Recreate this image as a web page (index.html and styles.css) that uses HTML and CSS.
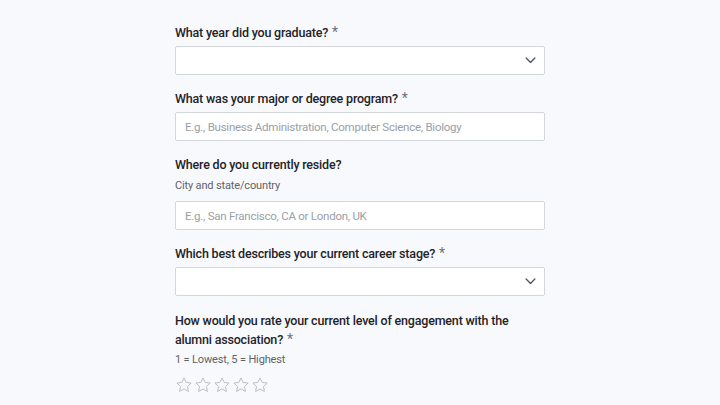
FILE: index.html
```html
<!DOCTYPE html>
<html>
<head>
<meta charset="utf-8">
<link rel="stylesheet" href="styles.css">
</head>
<body>
<main class="form">
  <div class="field">
    <label class="label">What year did you graduate? <span class="req">*</span></label>
    <div class="select"><svg class="chev" viewBox="0 0 12 8" width="11" height="7"><path d="M1 1.2l5 5 5-5" fill="none" stroke="#4b5563" stroke-width="1.5" stroke-linecap="round" stroke-linejoin="round"/></svg></div>
  </div>
  <div class="field">
    <label class="label">What was your major or degree program? <span class="req">*</span></label>
    <div class="input"><span class="ph">E.g., Business Administration, Computer Science, Biology</span></div>
  </div>
  <div class="field">
    <label class="label">Where do you currently reside?</label>
    <div class="desc">City and state/country</div>
    <div class="input spaced"><span class="ph">E.g., San Francisco, CA or London, UK</span></div>
  </div>
  <div class="field">
    <label class="label">Which best describes your current career stage? <span class="req">*</span></label>
    <div class="select"><svg class="chev" viewBox="0 0 12 8" width="11" height="7"><path d="M1 1.2l5 5 5-5" fill="none" stroke="#4b5563" stroke-width="1.5" stroke-linecap="round" stroke-linejoin="round"/></svg></div>
  </div>
  <div class="field last">
    <label class="label two">How would you rate your current level of engagement with the <span class="nw">alumni association? <span class="req">*</span></span></label>
    <div class="desc tight">1 = Lowest, 5 = Highest</div>
    <div class="stars">
      <svg viewBox="0 0 24 24" width="18" height="18"><path d="M12 2.5l2.9 6.1 6.6.8-4.9 4.6 1.3 6.6L12 17.3l-5.9 3.3 1.3-6.6-4.9-4.6 6.6-.8z" fill="none" stroke="#b8bcc4" stroke-width="1.3" stroke-linejoin="round"/></svg>
      <svg viewBox="0 0 24 24" width="18" height="18"><path d="M12 2.5l2.9 6.1 6.6.8-4.9 4.6 1.3 6.6L12 17.3l-5.9 3.3 1.3-6.6-4.9-4.6 6.6-.8z" fill="none" stroke="#b8bcc4" stroke-width="1.3" stroke-linejoin="round"/></svg>
      <svg viewBox="0 0 24 24" width="18" height="18"><path d="M12 2.5l2.9 6.1 6.6.8-4.9 4.6 1.3 6.6L12 17.3l-5.9 3.3 1.3-6.6-4.9-4.6 6.6-.8z" fill="none" stroke="#b8bcc4" stroke-width="1.3" stroke-linejoin="round"/></svg>
      <svg viewBox="0 0 24 24" width="18" height="18"><path d="M12 2.5l2.9 6.1 6.6.8-4.9 4.6 1.3 6.6L12 17.3l-5.9 3.3 1.3-6.6-4.9-4.6 6.6-.8z" fill="none" stroke="#b8bcc4" stroke-width="1.3" stroke-linejoin="round"/></svg>
      <svg viewBox="0 0 24 24" width="18" height="18"><path d="M12 2.5l2.9 6.1 6.6.8-4.9 4.6 1.3 6.6L12 17.3l-5.9 3.3 1.3-6.6-4.9-4.6 6.6-.8z" fill="none" stroke="#b8bcc4" stroke-width="1.3" stroke-linejoin="round"/></svg>
    </div>
  </div>
</main>
</body>
</html>
```
FILE: styles.css
```css
html, body {
  margin: 0;
  padding: 0;
  background: #f8f9fc;
  font-family: Roboto, "Liberation Sans", sans-serif;
}
.form {
  width: 370px;
  margin: 0 auto;
  padding-top: 24px;
  display: flex;
  flex-direction: column;
  gap: 15px;
}
.field {
  display: flex;
  flex-direction: column;
}
.field.last { margin-top: 1px; }
.label {
  font-size: 12.5px;
  font-weight: 500;
  letter-spacing: -0.19px;
  line-height: 18px;
  color: #1f2328;
  margin-bottom: 4px;
}
.label.two { line-height: 18.5px; }
.nw { white-space: nowrap; }
.req {
  color: #6b7280;
  font-size: 14px;
  font-weight: 400;
  line-height: 0;
  margin-left: 1px;
}
.desc {
  font-size: 11px;
  letter-spacing: -0.15px;
  line-height: 16px;
  color: #5f6368;
  margin-top: 0;
}
.desc.tight { margin-top: -1px; }
.select, .input {
  box-sizing: border-box;
  height: 29px;
  background: #fff;
  border: 1px solid #d3d6db;
  border-radius: 2px;
  display: flex;
  align-items: center;
  padding: 0 9px;
}
.select { justify-content: flex-end; }
.chev { margin-right: -1px; }
.input.spaced { margin-top: 7px; }
.ph {
  font-size: 11.5px;
  letter-spacing: -0.25px;
  color: #9aa0a6;
}
.stars {
  margin-top: 8px;
  display: flex;
  gap: 1px;
}
```
